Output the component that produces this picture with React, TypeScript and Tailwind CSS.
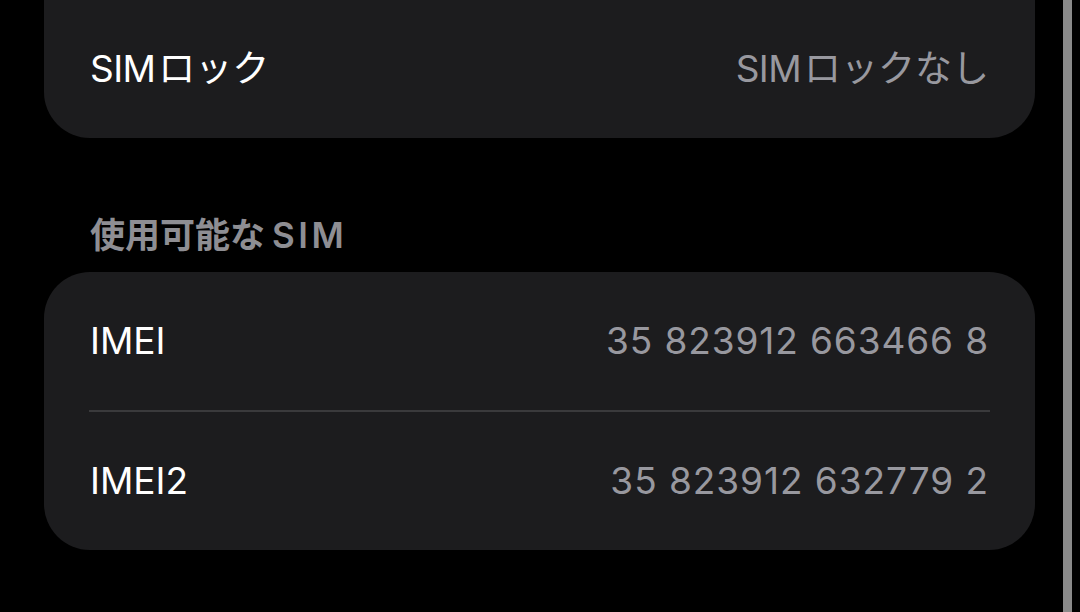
import React from "react";

const font = { fontFamily: "Inter, 'Noto Sans CJK JP', sans-serif" };

function Label({ latin, rest }: { latin: string; rest?: string }) {
  return (
    <>
      <span className="tracking-[-0.6px]">{latin}</span>
      {rest ? <span className="ml-[3px]">{rest}</span> : null}
    </>
  );
}

function Row({ label, value }: { label: React.ReactNode; value: React.ReactNode }) {
  return (
    <div className="h-[138px] flex items-center justify-between px-[46px]">
      <span className="text-[37px] text-white">{label}</span>
      <span className="text-[37px] text-[#98989f]">{value}</span>
    </div>
  );
}

export default function App() {
  return (
    <div className="w-[1080px] h-[612px] bg-black overflow-hidden flex" style={font}>
      <div className="ml-[44px] w-[991px] flex flex-col">
        <div className="-mt-[60px] pt-[60px] bg-[#1c1c1e] rounded-[46px]">
          <Row
            label={<Label latin="SIM" rest="ロック" />}
            value={<Label latin="SIM" rest="ロックなし" />}
          />
        </div>
        <div className="h-[134px] flex items-center pt-[60px] px-[46px]">
          <span className="text-[35px] font-semibold text-[#8e8e93]">
            使用可能な<span className="ml-[7px] tracking-[3.5px]">SIM</span>
          </span>
        </div>
        <div className="bg-[#1c1c1e] rounded-[46px]">
          <Row label="IMEI" value={<span className="tracking-[0.9px]">35 823912 663466 8</span>} />
          <div className="mx-[45px] h-[2px] bg-[#3a3a3c]" />
          <Row label="IMEI2" value={<span className="tracking-[0.95px]">35 823912 632779 2</span>} />
        </div>
      </div>
      <div className="ml-[28px] w-[9px] h-full bg-[#8a8a8a]" />
    </div>
  );
}
